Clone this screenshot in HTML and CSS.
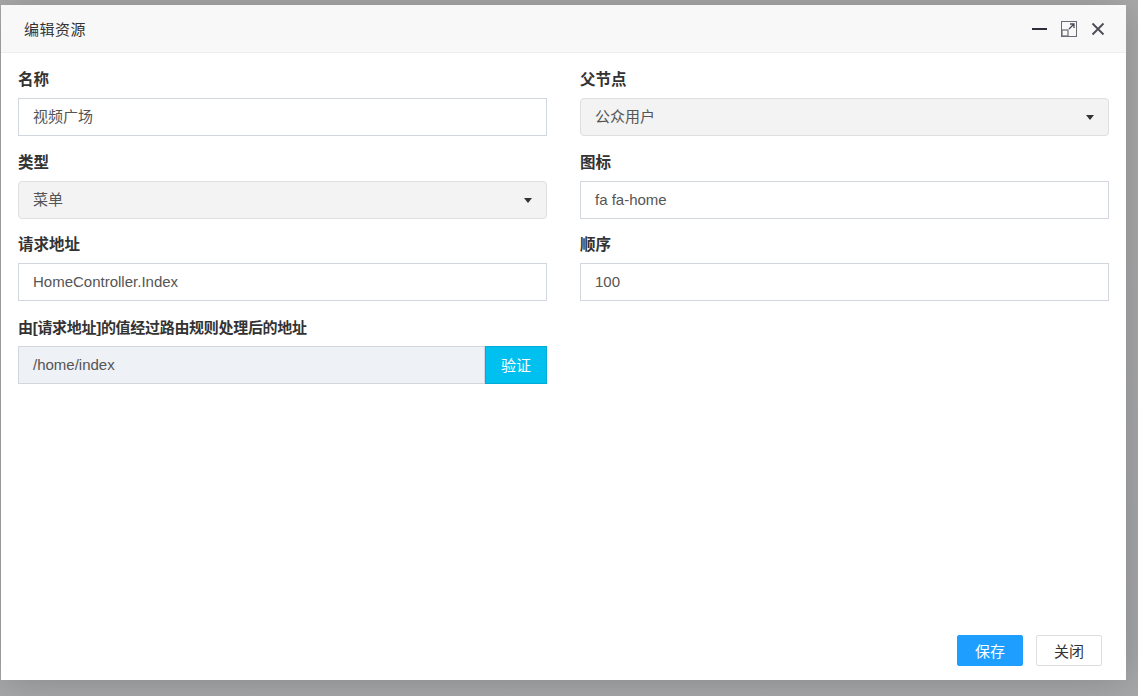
FILE: index.html
```html
<!DOCTYPE html>
<html lang="zh-CN">
<head>
    <meta charset="UTF-8">
    <title>编辑资源</title>
    <link rel="stylesheet" href="styles.css">
</head>
<body>
    <div class="backdrop">
        <div class="layer">
            <div class="layer-title">
                <span class="title-text">编辑资源</span>
                <div class="title-tools">
                    <span class="tool tool-min"></span>
                    <svg class="tool" width="16" height="16" viewBox="0 0 16 16">
                        <rect x="0.5" y="0.5" width="15" height="15" fill="none" stroke="#6b6b74" stroke-width="1"/>
                        <rect x="1" y="9" width="6" height="6" fill="none" stroke="#6b6b74" stroke-width="1.2"/>
                        <path d="M8 8 L13 3 M9 3 H13 V7" fill="none" stroke="#4a4a55" stroke-width="1.3"/>
                    </svg>
                    <svg class="tool" width="14" height="14" viewBox="0 0 14 14">
                        <path d="M1.5 1.5 L12.5 12.5 M12.5 1.5 L1.5 12.5" stroke="#4b4b55" stroke-width="1.8"/>
                    </svg>
                </div>
            </div>

            <div class="layer-content">
                <div class="form-grid">
                    <div class="form-group">
                        <label>名称</label>
                        <div class="form-control">视频广场</div>
                    </div>
                    <div class="form-group">
                        <label>父节点</label>
                        <div class="form-control select">公众用户<span class="caret"></span></div>
                    </div>
                    <div class="form-group">
                        <label>类型</label>
                        <div class="form-control select">菜单<span class="caret"></span></div>
                    </div>
                    <div class="form-group">
                        <label>图标</label>
                        <div class="form-control">fa fa-home</div>
                    </div>
                    <div class="form-group">
                        <label>请求地址</label>
                        <div class="form-control">HomeController.Index</div>
                    </div>
                    <div class="form-group">
                        <label>顺序</label>
                        <div class="form-control">100</div>
                    </div>
                    <div class="form-group">
                        <label class="long">由[请求地址]的值经过路由规则处理后的地址</label>
                        <div class="input-group">
                            <div class="form-control readonly">/home/index</div>
                            <button class="btn-info">验证</button>
                        </div>
                    </div>
                </div>
            </div>

            <div class="layer-btns">
                <button class="btn btn-primary">保存</button>
                <button class="btn btn-default">关闭</button>
            </div>
        </div>
    </div>
</body>
</html>
```

FILE: styles.css
```css
* {
    box-sizing: border-box;
}

body {
    margin: 0;
    padding: 0;
    width: 1138px;
    height: 696px;
    overflow: hidden;
    font-family: "Liberation Sans", "Noto Sans CJK SC", sans-serif;
    background: linear-gradient(180deg, #aaaaab 0%, #a7a8aa 100%);
}

.backdrop {
    padding: 5px 0 0 1px;
}

.layer {
    width: 1125px;
    height: 675px;
    background: #fff;
    display: flex;
    flex-direction: column;
    box-shadow: 1px 1px 40px rgba(0, 0, 0, 0.2);
}

.layer-title {
    height: 48px;
    flex-shrink: 0;
    background: #f8f8f8;
    border-bottom: 1px solid #eee;
    display: flex;
    align-items: center;
    justify-content: space-between;
    padding: 0 21px 0 23px;
}

.title-text {
    font-size: 15px;
    color: #333;
    letter-spacing: 0.5px;
}

.title-tools {
    display: flex;
    align-items: center;
    gap: 14px;
}

.tool-min {
    display: block;
    width: 15px;
    height: 2px;
    background: #2e2d3c;
}

.layer-content {
    flex: 1;
    padding: 17px 17px 0 17px;
}

.form-grid {
    display: grid;
    grid-template-columns: 1fr 1fr;
    column-gap: 33px;
}

.form-group {
    margin-bottom: 16.67px;
}

.form-group label {
    display: block;
    height: 20px;
    line-height: 20px;
    margin-bottom: 8px;
    font-size: 15.5px;
    font-weight: bold;
    color: #333;
}

.form-group label.long {
    font-size: 15px;
    letter-spacing: -0.3px;
}

.form-control {
    height: 38px;
    line-height: 36px;
    padding: 0 14px;
    border: 1px solid #d2d6de;
    font-size: 15px;
    color: #555;
    background: #fff;
    position: relative;
}

.form-control.select {
    background: #f3f3f3;
    border-color: #dfdfdf;
    border-radius: 4px;
}

.caret {
    position: absolute;
    right: 14px;
    top: 16px;
    width: 0;
    height: 0;
    border-left: 4.5px solid transparent;
    border-right: 4.5px solid transparent;
    border-top: 5px solid #333;
}

.input-group {
    display: flex;
}

.input-group .form-control {
    flex: 1;
}

.form-control.readonly {
    background: #eef1f5;
}

.btn-info {
    width: 62px;
    height: 38px;
    border: 1px solid #00acd6;
    background: #00c0ef;
    color: #fff;
    font-size: 15px;
    font-family: inherit;
    padding: 0;
}

.layer-btns {
    display: flex;
    justify-content: flex-end;
    gap: 13px;
    padding: 0 24px 14px 0;
}

.btn {
    width: 66px;
    height: 31px;
    border-radius: 2px;
    font-size: 15px;
    font-family: inherit;
    padding: 0;
}

.btn-primary {
    background: #1e9fff;
    border: 1px solid #1e9fff;
    color: #fff;
}

.btn-default {
    background: #fff;
    border: 1px solid #dedede;
    color: #333;
}
```
